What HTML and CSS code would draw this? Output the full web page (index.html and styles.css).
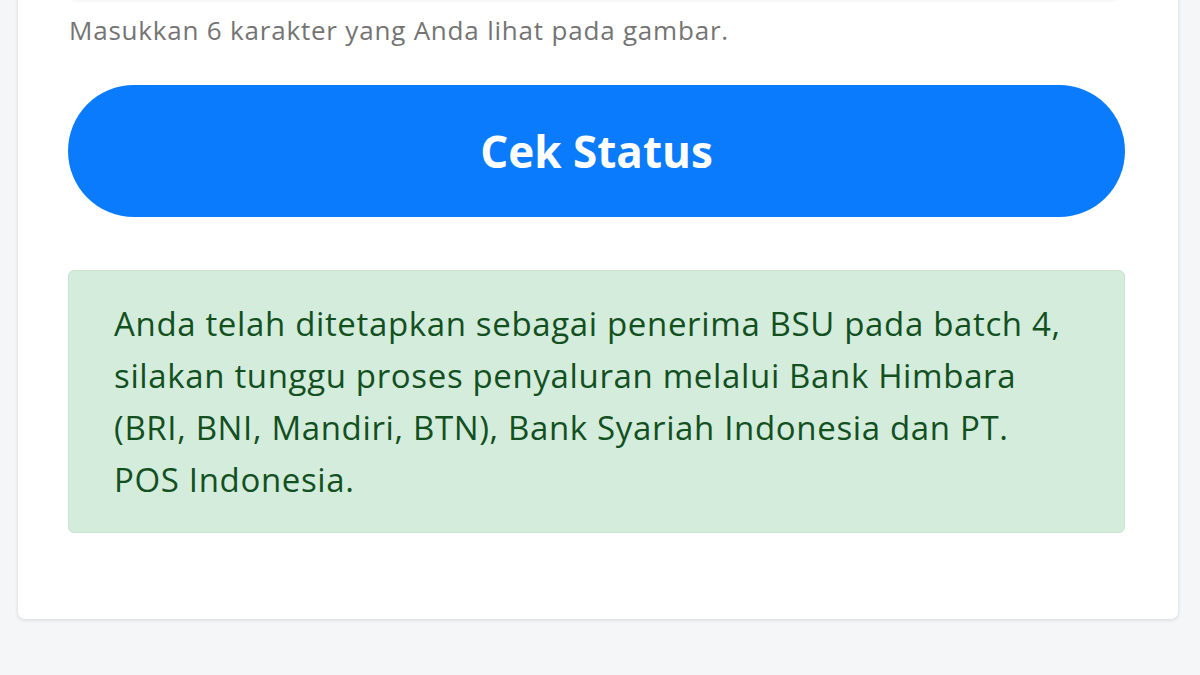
FILE: index.html
```html
<!DOCTYPE html>
<html>
<head>
<link rel="stylesheet" href="styles.css">
</head>
<body>
<div class="page">
  <div class="card">
    <input class="captcha-input" type="text">
    <p class="helper">Masukkan 6 karakter yang Anda lihat pada gambar.</p>
    <button class="btn-cek">Cek Status</button>
    <div class="alert-success">
      Anda telah ditetapkan sebagai penerima BSU pada batch 4, silakan tunggu proses penyaluran melalui Bank Himbara (BRI, BNI, Mandiri, BTN), Bank Syariah Indonesia dan PT. POS Indonesia.
    </div>
  </div>
</div>
</body>
</html>
```

FILE: styles.css
```css
body {
  margin: 0;
  background: #f5f6f8;
  font-family: "Open Sans", "Noto Sans", sans-serif;
  height: 675px;
  overflow: hidden;
}

.page {
  padding: 0 22px 0 18px;
}

.card {
  margin-top: -72px;
  background: #fff;
  border-radius: 0 0 7px 7px;
  box-shadow: 0 1px 4px rgba(0, 0, 0, 0.13);
  padding: 0 53px 86px 50px;
  display: flex;
  flex-direction: column;
}

.captcha-input {
  height: 72px;
  box-sizing: border-box;
  border: 1px solid #e6e6e6;
  border-radius: 6px;
  margin: 0 6px 0 2px;
  box-shadow: 0 1px 3px rgba(0, 0, 0, 0.06);
}

.helper {
  margin: 14px 0 0 1px;
  font-size: 26px;
  letter-spacing: 0.8px;
  line-height: 32px;
  color: #747474;
}

.btn-cek {
  margin-top: 39px;
  height: 132px;
  border: none;
  border-radius: 66px;
  background: #0a7bfd;
  color: #fff;
  font-family: "Open Sans", "Noto Sans", sans-serif;
  font-size: 44px;
  font-weight: 700;
  padding: 0;
}

.alert-success {
  margin-top: 53px;
  background: #d4ecdb;
  border: 1px solid #c8e4cf;
  border-radius: 6px;
  color: #12501f;
  font-size: 33px;
  letter-spacing: 0.65px;
  line-height: 52px;
  padding: 27px 44px 26px 45px;
}
```
